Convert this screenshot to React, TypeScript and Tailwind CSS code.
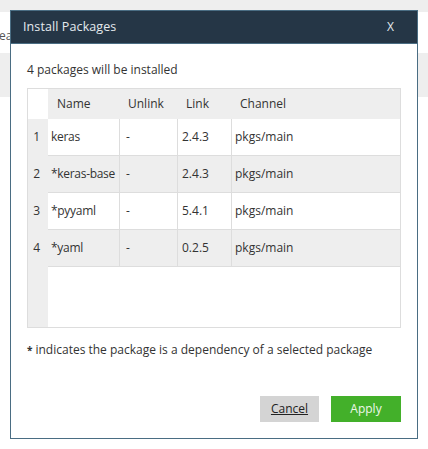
import React from "react";

const rows = [
  { n: "1", name: "keras", unlink: "-", link: "2.4.3", ch: "pkgs/main", bg: "bg-white" },
  { n: "2", name: "*keras-base", unlink: "-", link: "2.4.3", ch: "pkgs/main", bg: "bg-[#eeeeee]" },
  { n: "3", name: "*pyyaml", unlink: "-", link: "5.4.1", ch: "pkgs/main", bg: "bg-white" },
  { n: "4", name: "*yaml", unlink: "-", link: "0.2.5", ch: "pkgs/main", bg: "bg-[#eeeeee]" },
];

export default function App() {
  return (
    <div
      className="relative w-[428px] h-[449px] overflow-hidden bg-white text-[12px] text-[#333]"
      style={{ fontFamily: '"Open Sans", "Noto Sans", sans-serif' }}
    >
      {/* background page */}
      <div className="flex flex-col">
        <div className="h-[12px] bg-[#eeeeee]" />
        <div className="h-[41px] bg-white flex items-center">
          <span className="-ml-[1px] pt-[6px] text-[#555]">eady</span>
        </div>
        <div className="h-[44px] bg-[#eeeeee]" />
      </div>

      {/* dialog */}
      <div className="absolute left-[10px] top-[10px] w-[408px] h-[429px] border border-[#4a6d83] bg-white flex flex-col">
        <div className="h-[33px] bg-[#253646] border-b border-[#4a6d83] flex items-center justify-between pl-[12px] pr-[23px]">
          <span className="text-[12.5px] text-[#e4eaee] tracking-[0.1px]">Install Packages</span>
          <span className="text-[12px] text-[#e4eaee]">X</span>
        </div>
        <div className="flex flex-col px-[16px]">
          <div className="h-[44px] flex items-center pt-[7px]">4 packages will be installed</div>
          <div className="h-[240px] border border-[#dddddd] flex">
            {/* row number column */}
            <div className="w-[20px] flex flex-col bg-[#eeeeee]">
              <div className="h-[30px] bg-white" />
              {rows.map((r) => (
                <div key={r.n} className="h-[37px] flex items-center justify-end pr-[8px] pb-[1px]">
                  {r.n}
                </div>
              ))}
            </div>
            <div className="flex-1 flex flex-col">
              <div className="h-[30px] bg-[#eeeeee] flex items-center">
                <div className="w-[72px] pl-[9px]">Name</div>
                <div className="w-[58px] pl-[8px]">Unlink</div>
                <div className="w-[54px] pl-[8px]">Link</div>
                <div className="flex-1 pl-[8px]">Channel</div>
              </div>
              {rows.map((r) => (
                <div key={r.n} className={`h-[37px] flex border-b border-[#dddddd] ${r.bg}`}>
                  <div className="w-[72px] pl-[3px] flex items-center border-r border-[#dddddd] whitespace-nowrap tracking-[-0.3px]">
                    {r.name}
                  </div>
                  <div className="w-[58px] pl-[6px] flex items-center border-r border-[#dddddd]">{r.unlink}</div>
                  <div className="w-[54px] pl-[4px] flex items-center border-r border-[#dddddd]">{r.link}</div>
                  <div className="flex-1 pl-[3px] flex items-center">{r.ch}</div>
                </div>
              ))}
            </div>
          </div>
          <div className="h-[44px] flex items-center">
            <span className="font-bold text-[10px] mr-[3px]">*</span>
            <span>indicates the package is a dependency of a selected package</span>
          </div>
          <div className="flex justify-end gap-[12px] pt-[24px]">
            <button className="w-[59px] h-[26px] bg-[#d4d4d4] text-[#222] underline">Cancel</button>
            <button className="w-[70px] h-[26px] bg-[#43b02a] text-[#eef7ea]">Apply</button>
          </div>
        </div>
      </div>
    </div>
  );
}
